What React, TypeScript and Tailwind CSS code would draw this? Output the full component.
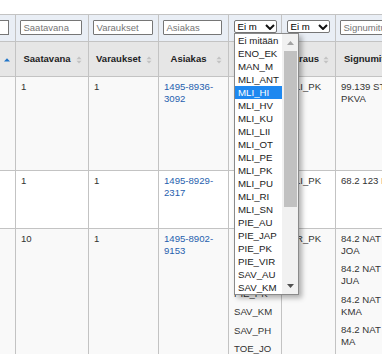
import React from "react";

const BL = "border-l border-[#c3c3c3]";

function Sort() {
  return (
    <svg width="6" height="8" viewBox="0 0 6 8" className="absolute right-[6px] top-[14px]">
      <path d="M0.5 3.2 L3 0.4 L5.5 3.2 Z" fill="#c2c2c2" />
      <path d="M0.5 4.8 L3 7.6 L5.5 4.8 Z" fill="#c2c2c2" />
    </svg>
  );
}

function Chevron() {
  return (
    <svg width="10" height="6" viewBox="0 0 10 6" className="shrink-0">
      <path d="M1 1 L5 5 L9 1" fill="none" stroke="#111" strokeWidth="2" />
    </svg>
  );
}

function Input({ w, ph }: { w: string; ph: string }) {
  return (
    <div
      className={`${w} h-[15px] shrink-0 overflow-hidden whitespace-nowrap rounded-[1px] border border-[#767676] bg-white pl-[2.5px] text-[9.5px] leading-[13px] text-[#757575]`}
    >
      {ph}
    </div>
  );
}

function Lines({ lines }: { lines: string[] }) {
  return (
    <div>
      {lines.map((l, i) => (
        <div key={i} className="whitespace-nowrap leading-[12px]">
          {l}
        </div>
      ))}
    </div>
  );
}

function List({ items }: { items: string[] }) {
  return (
    <div>
      {items.map((t, i) => (
        <div key={i} className="mb-[6.33px] whitespace-nowrap leading-[12px]">
          {t}
        </div>
      ))}
    </div>
  );
}

function Groups({ groups }: { groups: string[][] }) {
  return (
    <div>
      {groups.map((g, i) => (
        <div key={i} className="mb-[6.33px]">
          {g.map((l, j) => (
            <div key={j} className="whitespace-nowrap leading-[12px]">
              {l}
            </div>
          ))}
        </div>
      ))}
    </div>
  );
}

type Row = {
  h: string;
  bg: string;
  c1: string;
  c2: string;
  c3: string[];
  c4: string[];
  c5: string;
  c6: string[][];
};

const rows: Row[] = [
  {
    h: "h-[94px]",
    bg: "bg-[#f9f9f9]",
    c1: "1",
    c2: "1",
    c3: ["1495-8936-", "3092"],
    c4: ["MLI_HI", "MLI_KU", "MLI_PK", "PIE_AU", "SAV_KM"],
    c5: "MLI_PK",
    c6: [["99.139 ST", "PKVA"]],
  },
  {
    h: "h-[58px]",
    bg: "bg-white",
    c1: "1",
    c2: "1",
    c3: ["1495-8929-", "2317"],
    c4: ["MLI_HI", "MLI_PK", "PIE_AU"],
    c5: "MLI_PK",
    c6: [["68.2 123 I"]],
  },
  {
    h: "h-[140px]",
    bg: "bg-[#f9f9f9]",
    c1: "10",
    c2: "1",
    c3: ["1495-8902-", "9153"],
    c4: ["MLI_PK", "MLI_SN", "PIE_AU", "PIE_PK", "SAV_KM", "SAV_PH", "TOE_JO", "VIR_PK"],
    c5: "VIR_PK",
    c6: [
      ["84.2 NAT", "JOA"],
      ["84.2 NAT", "JUA"],
      ["84.2 NAT", "KMA"],
      ["84.2 NAT", "MA"],
    ],
  },
];

const options = [
  "Ei mitään",
  "ENO_EK",
  "MAN_M",
  "MLI_ANT",
  "MLI_HI",
  "MLI_HV",
  "MLI_KU",
  "MLI_LII",
  "MLI_OT",
  "MLI_PE",
  "MLI_PK",
  "MLI_PU",
  "MLI_RI",
  "MLI_SN",
  "PIE_AU",
  "PIE_JAP",
  "PIE_PK",
  "PIE_VIR",
  "SAV_AU",
  "SAV_KM",
];

export default function App() {
  return (
    <div className="relative h-[354px] w-[382px] overflow-hidden bg-white font-['Liberation_Sans',Arial,sans-serif] text-[9.6px] text-[#333]">
      <div className="h-[14px]" />
      {/* filter row */}
      <div className="flex h-[27px] border-t border-[#c3c3c3] bg-[#e9eef5]">
        <div className="w-[15px] shrink-0 overflow-hidden pt-[5px]">
          <div className="ml-[-53px] h-[15px] w-[62px] border border-[#767676] bg-white" />
        </div>
        <div className={`w-[73px] shrink-0 pl-[4px] pt-[5px] ${BL}`}>
          <Input w="w-[62px]" ph="Saatavana" />
        </div>
        <div className={`w-[70px] shrink-0 pl-[4px] pt-[5px] ${BL}`}>
          <Input w="w-[60px]" ph="Varaukset" />
        </div>
        <div className={`w-[70px] shrink-0 pl-[4px] pt-[5px] ${BL}`}>
          <Input w="w-[59px]" ph="Asiakas" />
        </div>
        <div className={`w-[53px] shrink-0 pl-[5px] pt-[5px] ${BL}`}>
          <div className="flex h-[13px] w-[43px] items-center justify-between rounded-[2px] border border-[#767676] bg-white pl-[2.5px] pr-[1px] text-[9.6px] leading-[11px] text-black">
            <span>Ei m</span>
            <Chevron />
          </div>
        </div>
        <div className={`w-[54px] shrink-0 pl-[5px] pt-[5px] ${BL}`}>
          <div className="flex h-[13px] w-[43px] items-center justify-between rounded-[2px] border border-[#767676] bg-white pl-[2.5px] pr-[1px] text-[9.6px] leading-[11px] text-black">
            <span className="whitespace-nowrap">Ei m</span>
            <Chevron />
          </div>
        </div>
        <div className={`w-[140px] shrink-0 pl-[4px] pt-[5px] ${BL}`}>
          <Input w="w-[90px]" ph="Signumitunnus" />
        </div>
      </div>
      {/* header row */}
      <div className="flex h-[35px] border-t border-[#c3c3c3] bg-[#e6e6e6] text-[9.5px] font-bold text-[#222]">
        <div className="relative w-[15px] shrink-0">
          <svg width="6" height="4" viewBox="0 0 6 4" className="absolute left-[3.5px] top-[15.5px]">
            <path d="M0 3.6 L3 0.3 L6 3.6 Z" fill="#1f74c8" />
          </svg>
        </div>
        <div className={`relative flex w-[73px] shrink-0 items-center justify-center pl-[8px] pr-[18px] ${BL}`}>
          Saatavana
          <Sort />
        </div>
        <div className={`relative flex w-[70px] shrink-0 items-center justify-center pl-[8px] pr-[18px] ${BL}`}>
          Varaukset
          <Sort />
        </div>
        <div className={`relative flex w-[70px] shrink-0 items-center justify-center pl-[8px] pr-[18px] ${BL}`}>
          Asiakas
          <Sort />
        </div>
        <div className={`relative flex w-[53px] shrink-0 items-center justify-center pl-[8px] pr-[18px] ${BL}`}>
          Alue
          <Sort />
        </div>
        <div className={`relative flex w-[54px] shrink-0 items-center justify-center pl-[8px] pr-[18px] ${BL}`}>
          <span className="whitespace-nowrap">Varaus</span>
          <Sort />
        </div>
        <div className={`relative flex w-[140px] shrink-0 items-center pl-[8px] ${BL}`}>
          <span className="whitespace-nowrap">Signumit</span>
        </div>
      </div>
      {/* body rows */}
      {rows.map((r, i) => (
        <div key={i} className={`flex ${r.h} border-t border-[#c3c3c3] ${r.bg}`}>
          <div className="w-[15px] shrink-0" />
          <div className={`w-[73px] shrink-0 pl-[5px] pt-[4px] leading-[12px] ${BL}`}>{r.c1}</div>
          <div className={`w-[70px] shrink-0 pl-[5px] pt-[4px] leading-[12px] ${BL}`}>{r.c2}</div>
          <div className={`w-[70px] shrink-0 pl-[5px] pt-[4px] text-[#1f5fae] ${BL}`}>
            <Lines lines={r.c3} />
          </div>
          <div className={`w-[53px] shrink-0 overflow-hidden pl-[5px] pt-[4px] ${BL}`}>
            <List items={r.c4} />
          </div>
          <div className={`w-[54px] shrink-0 pl-[5px] pt-[4px] leading-[12px] ${BL}`}>{r.c5}</div>
          <div className={`w-[140px] shrink-0 pl-[5px] pt-[4px] ${BL}`}>
            <Groups groups={r.c6} />
          </div>
        </div>
      ))}

      {/* open select dropdown */}
      <div className="absolute left-[234px] top-[33px] flex h-[262px] w-[65px] border border-[#8a8a8a] bg-white shadow-[3px_3px_5px_rgba(0,0,0,0.3)]">
        <div className="w-[47px] shrink-0">
          {options.map((o) => (
            <div
              key={o}
              className={`h-[13px] whitespace-nowrap pl-[3px] text-[9.7px] leading-[13px] ${
                o === "MLI_HI" ? "bg-[#1e88f0] text-white" : "text-[#1a1a1a]"
              }`}
            >
              {o}
            </div>
          ))}
        </div>
        <div className="flex w-[16px] shrink-0 flex-col bg-[#f1f1f1]">
          <div className="flex h-[17px] items-center justify-center">
            <svg width="7" height="4" viewBox="0 0 7 4">
              <path d="M0 4 L3.5 0 L7 4 Z" fill="#a3a3a3" />
            </svg>
          </div>
          <div className="pl-[2px] pr-[1px]">
            <div className="h-[156px] bg-[#c1c1c1]" />
          </div>
          <div className="flex-1" />
          <div className="flex h-[17px] items-center justify-center">
            <svg width="7" height="4" viewBox="0 0 7 4">
              <path d="M0 0 L3.5 4 L7 0 Z" fill="#505050" />
            </svg>
          </div>
        </div>
      </div>
    </div>
  );
}
